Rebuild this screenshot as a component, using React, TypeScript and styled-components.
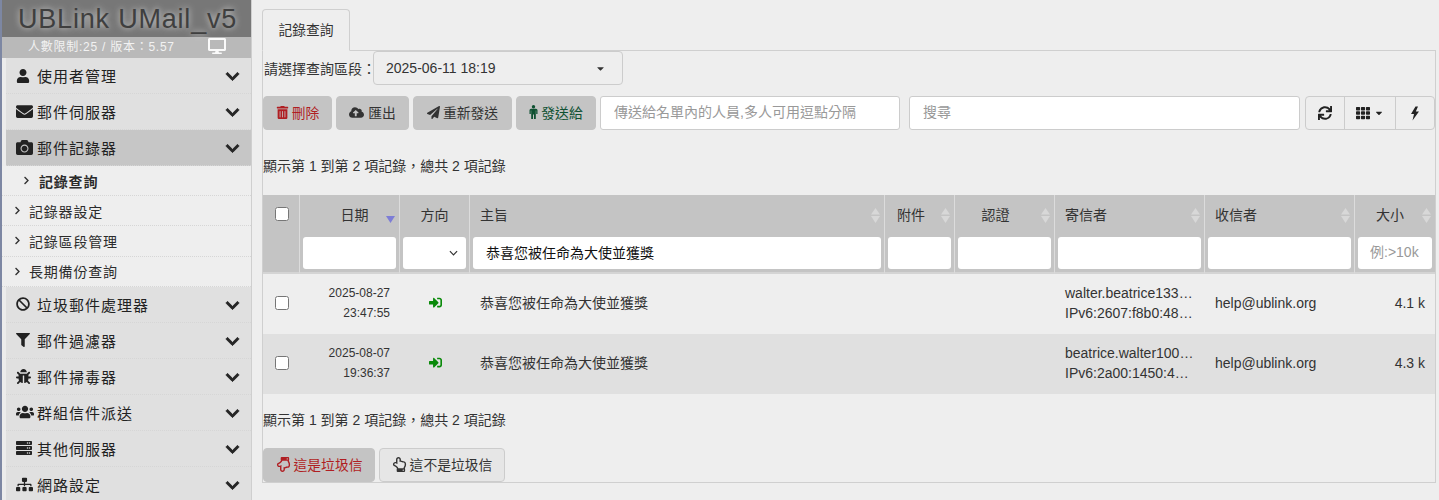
import React from "react";
import styled, { createGlobalStyle } from "styled-components";
import {
  FaUser, FaEnvelope, FaCamera, FaBan, FaFilter, FaBug, FaUsers, FaServer, FaSitemap,
  FaChevronDown, FaChevronRight, FaDesktop, FaTrashAlt, FaCloudUploadAlt, FaPaperPlane,
  FaSync, FaTh, FaRegHandPointDown, FaRegHandPointUp, FaCaretDown, FaSignInAlt,
} from "react-icons/fa";

const stack = `"Liberation Sans", "Noto Sans CJK TC", sans-serif`;

const selectArrow = `url("data:image/svg+xml,%3Csvg xmlns='http://www.w3.org/2000/svg' viewBox='0 0 10 6'%3E%3Cpath d='M1 1l4 4 4-4' fill='none' stroke='%23333' stroke-width='1.3'/%3E%3C/svg%3E")`;

const Global = createGlobalStyle`
  html, body { margin: 0; padding: 0; height: 500px; overflow: hidden; background: #eeeeee; }
  body { font-family: ${stack}; font-size: 14px; color: #333; }
  * { box-sizing: border-box; }
`;

const Page = styled.div`
  display: flex;
  width: 1439px;
  height: 500px;
  overflow: hidden;
`;

const Sidebar = styled.aside`
  width: 252px;
  height: 500px;
  flex: none;
  overflow: hidden;
  border-left: 2px solid #7d87a3;
  border-right: 1px solid #cfcfcf;
  background: #ececec;
`;

const Brand = styled.div`
  height: 37px;
  margin-right: -1px;
  background: #777777;
  color: #3f3f3f;
  font-size: 27px;
  line-height: 38px;
  letter-spacing: 0.8px;
  padding-left: 16px;
  white-space: nowrap;
  text-shadow: 0 0 6px #d8d8d8;
`;

const Status = styled.div`
  height: 21px;
  margin-right: -1px;
  background: #b9b9b9;
  color: #f2f2f2;
  font-size: 12px;
  line-height: 21px;
  letter-spacing: 0.75px;
  padding-left: 26px;
  display: flex;
  align-items: center;
  svg { position: relative; top: -2px; margin-left: 33px; font-size: 18px; color: #fafafa; }
`;

const MenuItem = styled.div<{ $active?: boolean }>`
  height: 36px;
  margin-left: 4px;
  padding: 0 10px;
  display: flex;
  align-items: center;
  background: ${(p) => (p.$active ? "#c6c6c6" : "#e0e0e0")};
  border-bottom: 1px dotted #d6d6d6;
  color: #222;
  font-size: 15px;
  letter-spacing: 1px;
`;

const MenuIcon = styled.span`
  width: 21px;
  flex: none;
  display: flex;
  align-items: center;
  color: #222;
`;

const MenuLabel = styled.span`
  flex: 1;
  white-space: nowrap;
`;

const Chevron = styled(FaChevronDown)`
  position: relative;
  top: 1px;
  font-size: 15px;
  color: #262626;
  margin-right: 1px;
  stroke: currentColor;
  stroke-width: 28;
`;

const SubItem = styled.div<{ $current?: boolean }>`
  height: ${(p) => (p.$current ? "30px" : "30.33px")};
  display: flex;
  align-items: center;
  padding-left: ${(p) => (p.$current ? "20px" : "11px")};
  background: #eeeeee;
  border-bottom: 1px dotted #d6d6d6;
  color: #2b2b2b;
  font-size: 14px;
  letter-spacing: 0.8px;
  font-weight: ${(p) => (p.$current ? 700 : 400)};
  svg { font-size: 9px; margin-right: ${(p) => (p.$current ? "8px" : "7px")}; color: #333; }
`;

const Main = styled.main`
  flex: 1;
  min-width: 0;
  padding: 9px 3px 0 10px;
`;

const Tab = styled.div`
  width: 88px;
  height: 42px;
  margin-bottom: -1px;
  position: relative;
  z-index: 1;
  border: 1px solid #cfcfcf;
  border-bottom-color: #eeeeee;
  border-radius: 4px 4px 0 0;
  background: #eeeeee;
  color: #333;
  font-size: 13.8px;
  line-height: 41px;
  text-align: center;
`;

const Panel = styled.section`
  border: 1px solid #cfcfcf;
`;

const RangeRow = styled.div`
  height: 34px;
  display: flex;
  align-items: center;
  padding-left: 1px;
  font-size: 14px;
`;

const RangeSelect = styled.button`
  width: 250px;
  height: 34px;
  margin-left: -3px;
  padding: 0 16px 0 12px;
  display: flex;
  align-items: center;
  justify-content: space-between;
  border: 1px solid #cccccc;
  border-radius: 4px;
  background: #eeeeee;
  color: #333;
  font: 14px ${stack};
  svg { font-size: 11px; }
`;

const Toolbar = styled.div`
  display: flex;
  margin-top: 11px;
  height: 34px;
`;

const ActionButton = styled.button<{ $tone?: string; $width: number; $light?: boolean; $icon?: number; $gap?: number }>`
  width: ${(p) => p.$width}px;
  height: 34px;
  flex: none;
  margin-right: 4px;
  padding: 0 0 2px;
  display: inline-flex;
  align-items: center;
  justify-content: center;
  gap: ${(p) => p.$gap ?? 3}px;
  border: 1px solid ${(p) => (p.$light ? "#cccccc" : "#c4c4c4")};
  border-radius: 4px;
  background: ${(p) => (p.$light ? "#e6e6e6" : "#c4c4c4")};
  color: ${(p) => p.$tone ?? "#333"};
  font: 13.8px ${stack};
  svg { font-size: ${(p) => p.$icon ?? 13}px; }
`;

const PersonIcon = styled.svg`
  width: 9px;
  height: 14px;
  margin-right: 1px;
  fill: currentColor;
`;

const TextField = styled.input<{ $width?: number }>`
  height: 34px;
  ${(p) => (p.$width ? `width: ${p.$width}px; flex: none;` : "flex: 1; min-width: 0;")}
  padding: 0 13px 2px;
  border: 1px solid #cccccc;
  border-radius: 3px;
  background: #fff;
  font: 14px ${stack};
  &::placeholder { color: #999; opacity: 1; }
`;

const Spacer = styled.div`
  width: 9px;
  flex: none;
`;

const ToolGroup = styled.div`
  display: flex;
  flex: none;
  margin-left: 5px;
  height: 34px;
  border: 1px solid #cccccc;
  border-radius: 4px;
`;

const ToolButton = styled.button<{ $width: number }>`
  width: ${(p) => p.$width}px;
  height: 32px;
  padding: 0;
  display: flex;
  align-items: center;
  justify-content: center;
  gap: 4px;
  border: 0;
  border-left: 1px solid #cccccc;
  background: transparent;
  color: #222;
  font-size: 14px;
  &:first-child { border-left: 0; }
  svg + svg { font-size: 10px; }
`;

const BoltIcon = styled.svg`
  width: 10px;
  height: 15px;
  fill: #222;
`;

const PageInfo = styled.div<{ $top: number }>`
  height: 20px;
  margin-top: ${(p) => p.$top}px;
  font-size: 14px;
  line-height: 20px;
  color: #333;
  white-space: nowrap;
`;

const DataTable = styled.table`
  width: 1172px;
  margin-top: 19px;
  table-layout: fixed;
  border-collapse: separate;
  border-spacing: 0;
`;

const HeadCell = styled.th<{ $align?: string; $pl?: number; $pr?: number }>`
  position: relative;
  height: 41px;
  padding: 0 ${(p) => p.$pr ?? 10}px 3px ${(p) => p.$pl ?? 10}px;
  background: #c4c4c4;
  border-right: 1px solid #dcdcdc;
  text-align: ${(p) => p.$align ?? "left"};
  font-weight: 400;
  font-size: 14px;
  color: #333;
  &:last-child { border-right: 0; }
`;

const FilterCell = styled.td`
  height: 38px;
  padding: 1px 3px 3px;
  background: #c4c4c4;
  border-right: 1px solid #dcdcdc;
  border-bottom: 2px solid #d4d4d4;
  &:last-child { border-right: 0; }
`;

const FilterInput = styled.input<{ $bold?: boolean }>`
  width: 100%;
  height: 32px;
  display: block;
  padding: 0 ${(p) => (p.$bold ? 13 : 12)}px 2px;
  border: 0;
  border-radius: 3px;
  background: #fff;
  color: ${(p) => (p.$bold ? "#111" : "#222")};
  font: 400 14px ${stack};
  &::placeholder { color: #999; opacity: 1; }
`;

const FilterSelect = styled.select`
  width: 100%;
  height: 32px;
  display: block;
  appearance: none;
  border: 0;
  border-radius: 3px;
  background: #fff ${selectArrow} no-repeat right 8px center / 9px 6px;
`;

const SortMark = styled.svg`
  position: absolute;
  top: 13px;
  right: 4px;
  width: 9px;
  height: 15px;
`;

const Row = styled.tr<{ $shade?: boolean }>`
  background: ${(p) => (p.$shade ? "#e0e0e0" : "#eeeeee")};
`;

const Cell = styled.td<{ $align?: string; $small?: boolean }>`
  height: 60px;
  padding: 0 10px 2px;
  text-align: ${(p) => p.$align ?? "left"};
  font-size: ${(p) => (p.$small ? 12 : 14)}px;
  line-height: 20px;
  color: #333;
  white-space: nowrap;
  overflow: hidden;
`;

const DirectionIcon = styled(FaSignInAlt)`
  position: relative;
  top: -1.5px;
  color: #0a8a0a;
  font-size: 13px;
  vertical-align: middle;
`;

const Check = styled.input`
  display: block;
  width: 14px;
  height: 14px;
  margin: 0 auto 0 2px;
`;

const FooterActions = styled.div`
  display: flex;
  margin-top: 18px;
  height: 34px;
`;

const COLS = [37, 100, 70, 415, 70, 100, 150, 150, 80];

const menuTop = [
  { icon: <FaUser size={14} />, label: "使用者管理" },
  { icon: <FaEnvelope size={17} />, label: "郵件伺服器" },
  { icon: <FaCamera size={17} />, label: "郵件記錄器", active: true },
];
const menuBottom = [
  { icon: <FaBan size={14} />, label: "垃圾郵件處理器" },
  { icon: <FaFilter size={14} />, label: "郵件過濾器" },
  { icon: <FaBug size={15} />, label: "郵件掃毒器" },
  { icon: <FaUsers size={18} />, label: "群組信件派送" },
  { icon: <FaServer size={16} />, label: "其他伺服器" },
  { icon: <FaSitemap size={17} />, label: "網路設定" },
];

const Sort = ({ active }: { active?: boolean }) => (
  <SortMark viewBox="0 0 9 15">
    {active ? (
      <path d="M0 8h9L4.500 15z" fill="#7d7dd6" />
    ) : (
      <>
        <path d="M4.500 0L9 6.500H0z" fill="#d8d8d8" />
        <path d="M0 8h9L4.500 15z" fill="#d8d8d8" />
      </>
    )}
  </SortMark>
);

const Menu = ({ items }: { items: { icon: React.ReactNode; label: string; active?: boolean }[] }) => (
  <>
    {items.map((m) => (
      <MenuItem key={m.label} $active={m.active}>
        <MenuIcon>{m.icon}</MenuIcon>
        <MenuLabel>{m.label}</MenuLabel>
        <Chevron />
      </MenuItem>
    ))}
  </>
);

const rows = [
  { d: "2025-08-27", t: "23:47:55", a: "walter.beatrice133…", b: "IPv6:2607:f8b0:48…", s: "4.1 k" },
  { d: "2025-08-07", t: "19:36:37", a: "beatrice.walter100…", b: "IPv6:2a00:1450:4…", s: "4.3 k" },
];

const subject = "恭喜您被任命為大使並獲獎";

export default function App() {
  return (
    <Page>
      <Global />
      <Sidebar>
        <Brand>UBLink UMail_v5</Brand>
        <Status>
          人數限制:25 / 版本：5.57
          <FaDesktop />
        </Status>
        <Menu items={menuTop} />
        <SubItem $current>
          <FaChevronRight />
          記錄查詢
        </SubItem>
        <SubItem><FaChevronRight />記錄器設定</SubItem>
        <SubItem><FaChevronRight />記錄區段管理</SubItem>
        <SubItem><FaChevronRight />長期備份查詢</SubItem>
        <Menu items={menuBottom} />
      </Sidebar>
      <Main>
        <Tab>記錄查詢</Tab>
        <Panel>
          <RangeRow>
            請選擇查詢區段：
            <RangeSelect>
              2025-06-11 18:19
              <FaCaretDown />
            </RangeSelect>
          </RangeRow>
          <Toolbar>
            <ActionButton $width={69} $tone="#b01e22"><FaTrashAlt />刪除</ActionButton>
            <ActionButton $width={73} $icon={15} $gap={4}><FaCloudUploadAlt />匯出</ActionButton>
            <ActionButton $width={99}><FaPaperPlane />重新發送</ActionButton>
            <ActionButton $width={80} $tone="#0f5132" $gap={2}>
              <PersonIcon viewBox="0 0 9 14">
                <circle cx="4.500" cy="1.700" r="1.700" />
                <path d="M2 3.800h5a1.500 1.500 0 0 1 1.500 1.500v3.700H7.200V5.500h-.4V14H5V9.500H4V14H2.200V5.500h-.4V9H.5V5.300A1.500 1.500 0 0 1 2 3.800z" />
              </PersonIcon>
              發送給
            </ActionButton>
            <TextField $width={300} placeholder="傳送給名單內的人員,多人可用逗點分隔" />
            <Spacer />
            <TextField placeholder="搜尋" />
            <ToolGroup>
              <ToolButton $width={38}><FaSync /></ToolButton>
              <ToolButton $width={51}><FaTh /><FaCaretDown /></ToolButton>
              <ToolButton $width={39}>
                <BoltIcon viewBox="0 0 10 14"><path d="M5.500 0L1 7.500h3L2.500 14 9 5H5.800L8 0z" /></BoltIcon>
              </ToolButton>
            </ToolGroup>
          </Toolbar>
          <PageInfo $top={26}>顯示第 1 到第 2 項記錄，總共 2 項記錄</PageInfo>
          <DataTable>
            <colgroup>
              {COLS.map((w, i) => <col key={i} width={w} />)}
            </colgroup>
            <thead>
              <tr>
                <HeadCell><Check type="checkbox" /></HeadCell>
                <HeadCell $align="center" $pl={20} $pr={10}>日期<Sort active /></HeadCell>
                <HeadCell $align="center">方向</HeadCell>
                <HeadCell>主旨<Sort /></HeadCell>
                <HeadCell $align="center" $pl={6} $pr={23}>附件<Sort /></HeadCell>
                <HeadCell $align="center" $pl={6} $pr={24}>認證<Sort /></HeadCell>
                <HeadCell>寄信者<Sort /></HeadCell>
                <HeadCell>收信者<Sort /></HeadCell>
                <HeadCell $align="center" $pl={6} $pr={16}>大小<Sort /></HeadCell>
              </tr>
              <tr>
                <FilterCell />
                <FilterCell><FilterInput /></FilterCell>
                <FilterCell>
                  <FilterSelect><option></option></FilterSelect>
                </FilterCell>
                <FilterCell><FilterInput $bold defaultValue={subject} /></FilterCell>
                <FilterCell><FilterInput /></FilterCell>
                <FilterCell><FilterInput /></FilterCell>
                <FilterCell><FilterInput /></FilterCell>
                <FilterCell><FilterInput /></FilterCell>
                <FilterCell><FilterInput placeholder="例:>10k" /></FilterCell>
              </tr>
            </thead>
            <tbody>
              {rows.map((r, i) => (
                <Row key={r.d} $shade={i === 1}>
                  <Cell><Check type="checkbox" /></Cell>
                  <Cell $align="right" $small>{r.d}<br />{r.t}</Cell>
                  <Cell $align="center"><DirectionIcon /></Cell>
                  <Cell>{subject}</Cell>
                  <Cell />
                  <Cell />
                  <Cell>{r.a}<br />{r.b}</Cell>
                  <Cell>help@ublink.org</Cell>
                  <Cell $align="right">{r.s}</Cell>
                </Row>
              ))}
            </tbody>
          </DataTable>
          <PageInfo $top={16}>顯示第 1 到第 2 項記錄，總共 2 項記錄</PageInfo>
          <FooterActions>
            <ActionButton $width={112} $tone="#b01e22" $icon={15}><FaRegHandPointDown />這是垃圾信</ActionButton>
            <ActionButton $width={126} $light $icon={15}><FaRegHandPointUp />這不是垃圾信</ActionButton>
          </FooterActions>
        </Panel>
      </Main>
    </Page>
  );
}
